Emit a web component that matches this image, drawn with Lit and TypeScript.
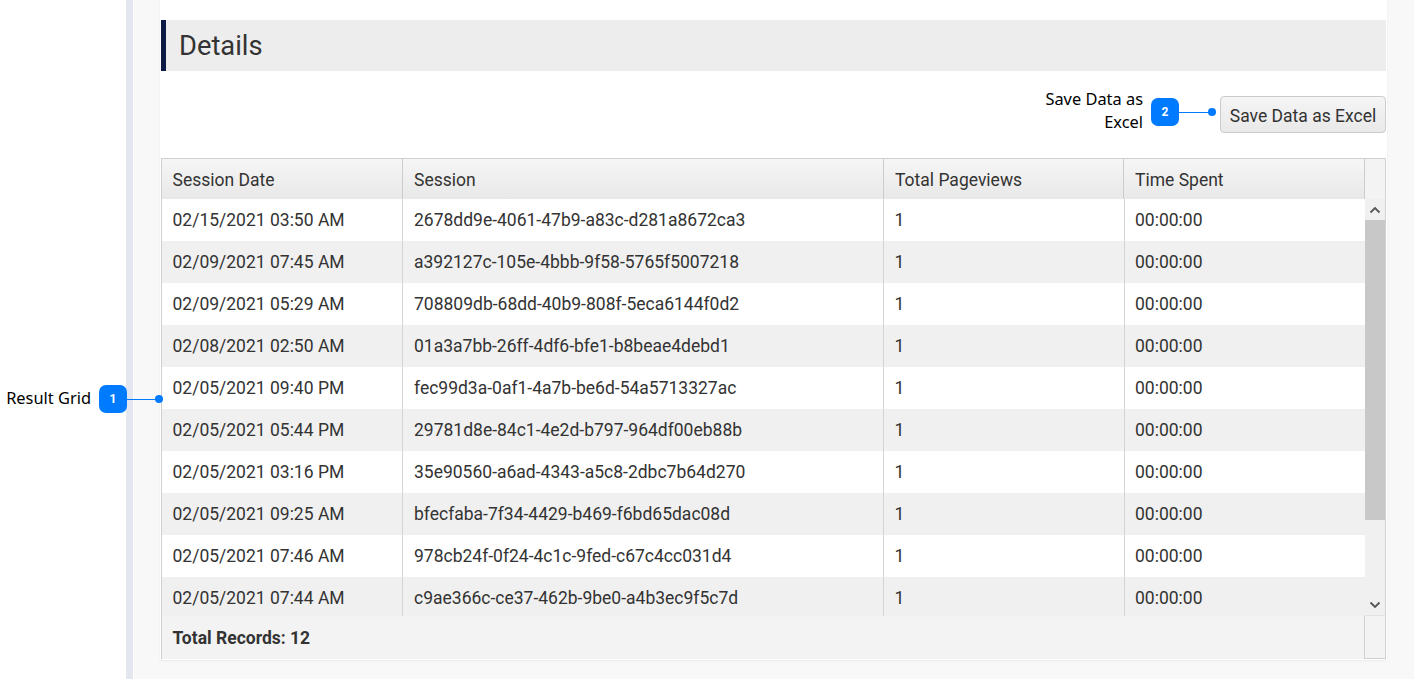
import { LitElement, html, css } from "lit";
import { customElement } from "lit/decorators.js";

const rows = [
  ["02/15/2021 03:50 AM", "2678dd9e-4061-47b9-a83c-d281a8672ca3"],
  ["02/09/2021 07:45 AM", "a392127c-105e-4bbb-9f58-5765f5007218"],
  ["02/09/2021 05:29 AM", "708809db-68dd-40b9-808f-5eca6144f0d2"],
  ["02/08/2021 02:50 AM", "01a3a7bb-26ff-4df6-bfe1-b8beae4debd1"],
  ["02/05/2021 09:40 PM", "fec99d3a-0af1-4a7b-be6d-54a5713327ac"],
  ["02/05/2021 05:44 PM", "29781d8e-84c1-4e2d-b797-964df00eb88b"],
  ["02/05/2021 03:16 PM", "35e90560-a6ad-4343-a5c8-2dbc7b64d270"],
  ["02/05/2021 09:25 AM", "bfecfaba-7f34-4429-b469-f6bd65dac08d"],
  ["02/05/2021 07:46 AM", "978cb24f-0f24-4c1c-9fed-c67c4cc031d4"],
  ["02/05/2021 07:44 AM", "c9ae366c-ce37-462b-9be0-a4b3ec9f5c7d"],
];

@customElement("app-root")
export class AppRoot extends LitElement {
  static styles = css`
    :host { display: block; position: relative; width: 1414px; height: 679px; overflow: hidden; background: #fff; font-family: Roboto, "Liberation Sans", sans-serif; color: #333; }
    * { box-sizing: border-box; }
    .page { display: flex; height: 679px; }
    .gutter { width: 126px; flex: none; }
    .strip { width: 7px; flex: none; background: #e3e6ee; }
    .stripline { width: 1px; flex: none; background: #fff; }
    .shell { flex: 1; background: #f8f8f8; padding: 0 27px 0 26px; }
    .panel { background: #fff; height: 660px; padding: 20px 1px 0 1px; box-shadow: 0 1px 2px rgba(0,0,0,.06); display: flex; flex-direction: column; }
    .head { height: 51px; flex: none; background: #ededed; border-left: 5px solid #0b1b46; padding-left: 13px; font-size: 27.3px; line-height: 53px; color: #333; }
    .actions { flex: none; display: flex; justify-content: flex-end; padding-top: 25px; height: 87px; }
    .btn { width: 166px; height: 37px; border: 1px solid #ccc; border-radius: 4px; background: linear-gradient(#f5f5f5, #e9e9e9); font: 17.5px Roboto, sans-serif; color: #333; padding: 2px 0 0; }
    .grid { flex: 1; border: 1px solid #d0d0d0; border-bottom-color: #fff; display: flex; flex-direction: column; min-height: 0; background: #f3f3f3; }
    .hrow { display: grid; grid-template-columns: 241px 481px 240px 241px 1fr; height: 40px; flex: none; background: linear-gradient(#f6f6f6, #e9e8e8); font-size: 17.5px; line-height: 42px; }
    .hrow > div { padding-left: 10.5px; border-right: 1px solid #ccc; }
    .hrow > div + div { padding-left: 11px; }
    .hrow > div.corner { border-right: 0; background: #f3f3f3; border-bottom: 1px solid #d8d8d8; padding: 0; }
    .mid { display: flex; height: 417px; flex: none; overflow: hidden; }
    .rows { width: 1203px; flex: none; overflow: hidden; }
    .row { display: grid; grid-template-columns: 241px 481px 241px 240px; height: 42px; line-height: 42px; font-size: 17.5px; background: #fff; }
    .row:nth-child(even) { background: #f0f0f0; }
    .row > div { padding-left: 10.5px; border-right: 1px solid #d4d4d4; }
    .row > div + div { padding-left: 11px; }
    .row > div:nth-child(3) { padding-left: 10.5px; }
    .row > div:last-child { border-right: 0; padding-left: 10px; }
    .sb { flex: 1; background: #f0f0f0; display: flex; flex-direction: column; border-bottom: 1px solid #e2e2e2; }
    .arrow { height: 21px; flex: none; display: flex; align-items: center; justify-content: center; }
    .track { flex: 1; }
    .thumb { height: 300px; width: 100%; background: #c8c8c8; }
    .foot { flex: 1; display: flex; font-size: 17.5px; font-weight: 700; color: #333; }
    .foot .t { flex: 1; padding: 12px 0 0 10.5px; line-height: 21px; }
    .foot .e { width: 21px; flex: none; border-left: 1px solid #d0d0d0; border-bottom: 1px solid #d0d0d0; }
    .callout { position: absolute; display: flex; align-items: center; }
    .lbl { font-size: 16.4px; line-height: 23px; color: #000; text-align: right; margin-bottom: 4px; font-family: "Noto Sans", "Open Sans", sans-serif; }
    .c1 { left: 0; top: 385px; }
    .c2 { left: 1040px; top: 87px; }
    .c1 .lbl { width: 91px; }
    .c2 .lbl { width: 103px; }
    .badge { width: 28px; height: 28px; border-radius: 7px; background: #007bff; color: #fff; font-size: 12px; font-weight: 700; display: flex; align-items: center; justify-content: center; flex: none; margin-left: 8px; }
    .line { height: 1px; background: #007bff; flex: none; }
    .c1 .line { width: 29px; }
    .c2 .line { width: 30px; }
    .dot { width: 8px; height: 8px; border-radius: 50%; background: #007bff; flex: none; margin-left: -1px; }
  `;

  render() {
    return html`
      <div class="page">
        <div class="gutter"></div>
        <div class="strip"></div>
        <div class="stripline"></div>
        <div class="shell">
          <div class="panel">
            <div class="head">Details</div>
            <div class="actions"><button class="btn">Save Data as Excel</button></div>
            <div class="grid">
              <div class="hrow">
                <div>Session Date</div><div>Session</div><div>Total Pageviews</div><div>Time Spent</div><div class="corner"></div>
              </div>
              <div class="mid">
                <div class="rows">
                  ${rows.map(r => html`<div class="row"><div>${r[0]}</div><div>${r[1]}</div><div>1</div><div>00:00:00</div></div>`)}
                </div>
                <div class="sb">
                  <div class="arrow"><svg width="12" height="8" viewBox="0 0 12 8"><path d="M1.5 6.5 6 2l4.5 4.5" fill="none" stroke="#555" stroke-width="1.8"/></svg></div>
                  <div class="track"><div class="thumb"></div></div>
                  <div class="arrow"><svg width="12" height="8" viewBox="0 0 12 8"><path d="M1.5 1.5 6 6l4.5-4.5" fill="none" stroke="#555" stroke-width="1.8"/></svg></div>
                </div>
              </div>
              <div class="foot"><div class="t">Total Records: 12</div><div class="e"></div></div>
            </div>
          </div>
        </div>
      </div>
      <div class="callout c1">
        <div class="lbl">Result Grid</div><div class="badge">1</div><div class="line"></div><div class="dot"></div>
      </div>
      <div class="callout c2">
        <div class="lbl">Save Data as Excel</div><div class="badge">2</div><div class="line"></div><div class="dot"></div>
      </div>
    `;
  }
}
